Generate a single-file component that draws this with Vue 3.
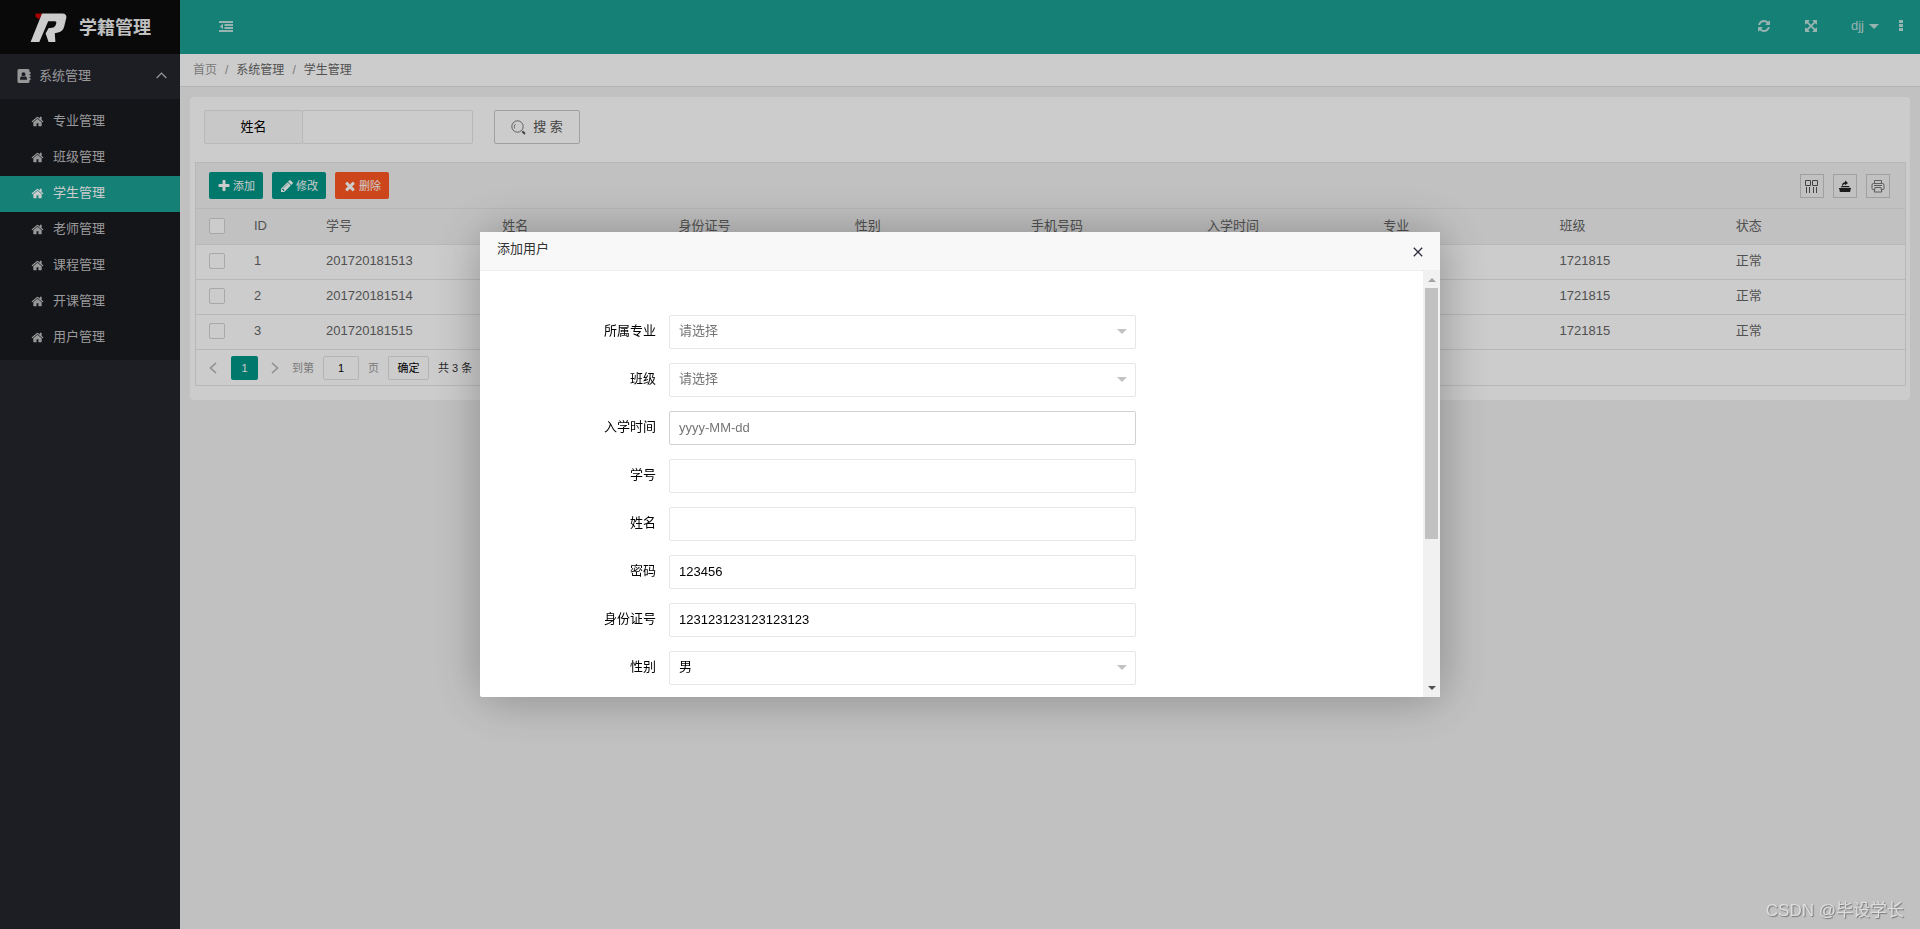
<script setup>
import { ref } from 'vue'

const menu = ['专业管理', '班级管理', '学生管理', '老师管理', '课程管理', '开课管理', '用户管理']
const active = ref('学生管理')
const columns = ['ID', '学号', '姓名', '身份证号', '性别', '手机号码', '入学时间', '专业', '班级', '状态']
const rows = [
  ['1', '201720181513', '', '', '', '', '', '', '1721815', '正常'],
  ['2', '201720181514', '', '', '', '', '', '', '1721815', '正常'],
  ['3', '201720181515', '', '', '', '', '', '', '1721815', '正常'],
]
const fields = ref([
  { id: 'major', label: '所属专业', type: 'select', value: '', options: [] },
  { id: 'class', label: '班级', type: 'select', value: '', options: [] },
  { id: 'date', label: '入学时间', type: 'text', value: '', placeholder: 'yyyy-MM-dd', hover: true },
  { id: 'number', label: '学号', type: 'text', value: '' },
  { id: 'name', label: '姓名', type: 'text', value: '' },
  { id: 'password', label: '密码', type: 'text', value: '123456' },
  { id: 'idcard', label: '身份证号', type: 'text', value: '123123123123123123' },
  { id: 'gender', label: '性别', type: 'select', value: '男', options: ['男', '女'] },
])
const keyword = ref('')
const page = ref('1')

const icons = {
  home: 'M1472 992v480q0 26-19 45t-45 19h-384v-384h-256v384h-384q-26 0-45-19t-19-45v-480q0-1 .5-3t.5-3l575-474 575 474q1 2 1 6zm223-69l-62 74q-8 9-21 11h-3q-13 0-21-7l-692-577-692 577q-12 8-24 7-13-2-21-11l-62-74q-8-10-7-23.5t11-21.5l719-599q32-26 76-26t76 26l244 204v-195q0-14 9-23t23-9h192q14 0 23 9t9 23v408l219 182q10 8 11 21.5t-7 23.5z',
  plus: 'M1600 736v192q0 40-28 68t-68 28h-416v416q0 40-28 68t-68 28h-192q-40 0-68-28t-28-68v-416h-416q-40 0-68-28t-28-68v-192q0-40 28-68t68-28h416v-416q0-40 28-68t68-28h192q40 0 68 28t28 68v416h416q40 0 68 28t28 68z',
  pencil: 'M491 1536l91-91-235-235-91 91v107h128v128h107zm523-928q0-22-22-22-10 0-17 7l-542 542q-7 7-7 17 0 22 22 22 10 0 17-7l542-542q7-7 7-17zm-54-192l416 416-832 832h-416v-416zm683 96q0 53-37 90l-166 166-416-416 166-165q36-38 90-38 53 0 91 38l235 234q37 39 37 91z',
  times: 'M1490 1322q0 40-28 68l-136 136q-28 28-68 28t-68-28l-294-294-294 294q-28 28-68 28t-68-28l-136-136q-28-28-28-68t28-68l294-294-294-294q-28-28-28-68t28-68l136-136q28-28 68-28t68 28l294 294 294-294q28-28 68-28t68 28l136 136q28 28 28 68t-28 68l-294 294 294 294q28 28 28 68z',
  refresh: 'M1639 1056q0 5-1 7-64 268-268 434.5t-478 166.5q-146 0-282.5-55t-243.5-157l-129 129q-19 19-45 19t-45-19-19-45v-448q0-26 19-45t45-19h448q26 0 45 19t19 45-19 45l-137 137q71 66 161 102t187 36q134 0 250-65t186-179q11-17 53-117 8-23 30-23h192q13 0 22.5 9.5t9.5 22.5zm25-800v448q0 26-19 45t-45 19h-448q-26 0-45-19t-19-45 19-45l138-138q-148-137-349-137-134 0-250 65t-186 179q-11 17-53 117-8 23-30 23h-199q-13 0-22.5-9.5t-9.5-22.5v-7q65-268 270-434.5t480-166.5q146 0 284 55.5t245 156.5l130-129q19-19 45-19t45 19 19 45z',
  expand: 'M1411 541l-355 355 355 355 144-144q29-31 70-14 39 17 39 59v448q0 26-19 45t-45 19h-448q-42 0-59-40-17-39 14-69l144-144-355-355-355 355 144 144q31 30 14 69-17 40-59 40h-448q-26 0-45-19t-19-45v-448q0-42 40-59 39-17 69 14l144 144 355-355-355-355-144 144q-19 19-45 19-12 0-24-5-40-17-40-59v-448q0-26 19-45t45-19h448q42 0 59 40 17 39-14 69l-144 144 355 355 355-355-144-144q-31-30-14-69 17-40 59-40h448q26 0 45 19t19 45v448q0 42-39 59-13 5-25 5-26 0-45-19z',
}
const actions = [
  { text: '添加', icon: 'plus' },
  { text: '修改', icon: 'pencil' },
  { text: '删除', icon: 'times', danger: true },
]
</script>

<template>
  <div class="layout">
    <aside class="side">
      <div class="logo">
        <svg class="logo-mark" viewBox="0 0 37 30" aria-hidden="true">
          <path fill="#d00000" d="M5.3 1.2 6.5.5H12L9 6.5 5.6 3.8z" />
          <path fill="#fff" d="M12 .4H32.5Q36.8.6 36.4 4.6L34.2 13.6Q33 18.6 28 19.6L24.8 20.2 25.4 29H18.6L15.6 20.4 18.5 15.2 23.4 14.6Q25.6 14 26.2 10.6 26.8 8.2 24.8 8.2H18.2L9.3 29H.6L9.4 7z" />
        </svg>
        <h1>学籍管理</h1>
      </div>
      <nav>
        <button class="group" type="button">
          <svg class="book" viewBox="0 0 14 14" aria-hidden="true">
            <path fill="currentColor" fill-rule="evenodd" d="M2 0h9q1.500 0 1.500 1.500V3h1v2h-1v1h1v2h-1v1h1v2h-1v1.500Q12.500 14 11 14H2Q.5 14 .5 12.500v-11Q.5 0 2 0zM6.500 3.200a2 2 0 1 0 0 4 2 2 0 0 0 0-4zM3 10.700h7Q10 7.500 8 7.200q-1.500 1-3 0Q3 7.500 3 10.700z" />
          </svg>
          <span>系统管理</span>
          <svg class="up" viewBox="0 0 11 7" aria-hidden="true"><path d="M.7 6 5.500 1l4.800 5" fill="none" stroke="currentColor" stroke-width="1.200" /></svg>
        </button>
        <ul class="submenu">
          <li v-for="item in menu" :key="item">
            <a href="#" :class="{ active: item === active }" @click.prevent="active = item">
              <svg class="fa" viewBox="0 0 1792 1792" aria-hidden="true"><path :d="icons.home" fill="currentColor" /></svg>
              {{ item }}
            </a>
          </li>
        </ul>
      </nav>
    </aside>

    <div class="main">
      <header class="top">
        <button type="button" aria-label="折叠菜单">
          <svg class="fold" viewBox="0 0 14 11" aria-hidden="true"><path fill="currentColor" d="M0 0h14v2H0zM5.500 3H14v2H5.500zM5.500 6H14v2H5.500zM0 9h14v2H0zM4 2.800v5.400L.8 5.500z" /></svg>
        </button>
        <div class="top-right">
          <button type="button" aria-label="刷新"><svg class="fa14" viewBox="0 0 1792 1792" aria-hidden="true"><path :d="icons.refresh" fill="currentColor" /></svg></button>
          <button type="button" aria-label="全屏"><svg class="fa14" viewBox="0 0 1792 1792" aria-hidden="true"><path :d="icons.expand" fill="currentColor" /></svg></button>
          <button type="button" class="user">djj<i></i></button>
          <button type="button" class="more" aria-label="更多"><svg viewBox="0 0 4 12" aria-hidden="true"><path fill="currentColor" d="M0 0h4v3H0zM0 4h4v3H0zM0 8h4v3H0z" /></svg></button>
        </div>
      </header>
      <nav class="crumbs">
        <a href="#" class="first">首页</a><span>/</span><a href="#">系统管理</a><span>/</span><a href="#">学生管理</a>
      </nav>

      <main class="card">
        <form class="search" @submit.prevent>
          <label for="keyword">姓名</label>
          <input id="keyword" v-model="keyword" type="text" />
          <button type="submit">
            <svg viewBox="0 0 15 15" aria-hidden="true">
              <circle cx="6.500" cy="6.500" r="5.700" fill="none" stroke="currentColor" stroke-width=".8" />
              <path d="M3.500 8.500Q2.500 5.500 4.500 4M10.500 10.500 14 14" fill="none" stroke="currentColor" stroke-width=".7" />
              <path d="M11.500 11.500 14 14" stroke="currentColor" stroke-width="2" />
            </svg>
            搜 索
          </button>
        </form>

        <section class="table-box">
          <div class="toolbar">
            <button v-for="a in actions" :key="a.text" type="button" class="action" :class="{ danger: a.danger }">
              <svg class="fa14" viewBox="0 0 1792 1792" aria-hidden="true"><path :d="icons[a.icon]" fill="currentColor" /></svg>{{ a.text }}
            </button>
            <div class="tools">
              <button type="button" aria-label="筛选列">
                <svg viewBox="0 0 14 14" fill="none" stroke="currentColor" aria-hidden="true"><path d="M.5 1.500h5v5h-5zM7.500 1.500h5v5h-5zM1.500 8v6M4.500 8v6M8.500 8v6M11.500 8v6" /></svg>
              </button>
              <button type="button" aria-label="导出">
                <svg viewBox="0 0 14 14" aria-hidden="true"><path fill="#222" d="M1 9h12v1.200h-.6V12q0 1-1 1H2.600q-1 0-1-1v-1.800H1zM3.500 7h7.500l.8 1.300H2.700zM4 6.500Q4 3.500 7 3.300V1.500L10 4 7 6.200V5Q5.300 5 4.900 6.500z" /></svg>
              </button>
              <button type="button" aria-label="打印">
                <svg viewBox="0 0 14 14" fill="none" stroke="currentColor" stroke-width=".8" aria-hidden="true"><path d="M3.500 4V1.500h7V4M3.500 10.500H2Q1 10.500 1 9.500V6Q1 4.500 2.500 4.500h9Q13 4.500 13 6v3.500q0 1-1 1h-1.500M4 8.500h6l.8 4.500H3.200zM3 6.500h8" /></svg>
              </button>
            </div>
          </div>
          <table>
            <colgroup>
              <col class="c-check" /><col class="c-id" /><col v-for="n in 9" :key="n" /><col class="c-end" />
            </colgroup>
            <thead>
              <tr>
                <th><input type="checkbox" aria-label="全选" /></th>
                <th v-for="c in columns" :key="c">{{ c }}</th>
                <th></th>
              </tr>
            </thead>
            <tbody>
              <tr v-for="r in rows" :key="r[0]">
                <td><input type="checkbox" :aria-label="'选择 ' + r[0]" /></td>
                <td v-for="(v, i) in r" :key="i">{{ v }}</td>
                <td></td>
              </tr>
            </tbody>
          </table>
          <div class="pager">
            <button type="button" class="arrow" aria-label="上一页"><svg viewBox="0 0 8 12" aria-hidden="true"><path d="M7 1 1.500 6 7 11" /></svg></button>
            <button type="button" class="current">1</button>
            <button type="button" class="arrow" aria-label="下一页"><svg viewBox="0 0 8 12" aria-hidden="true"><path d="M1 1l5.500 5L1 11" /></svg></button>
            <label for="page">到第</label>
            <input id="page" v-model="page" type="text" />
            <span class="muted">页</span>
            <button type="button" class="ok">确定</button>
            <span>共 3 条</span>
          </div>
        </section>
      </main>
    </div>

    <div class="mask"></div>

    <section class="dialog" role="dialog" aria-labelledby="dialog-title">
      <header>
        <h2 id="dialog-title">添加用户</h2>
        <button type="button" aria-label="关闭"><svg viewBox="0 0 10 10" aria-hidden="true"><path d="M.8.8l8.400 8.400M9.200.8.8 9.200" stroke="#2d2c3b" stroke-width="1.300" /></svg></button>
      </header>
      <div class="dialog-body">
        <form @submit.prevent>
          <div v-for="f in fields" :key="f.id" class="row">
            <label :for="f.id">{{ f.label }}</label>
            <div v-if="f.type === 'select'" class="select">
              <select :id="f.id" v-model="f.value" :class="{ empty: !f.value }">
                <option value="">请选择</option>
                <option v-for="o in f.options" :key="o" :value="o">{{ o }}</option>
              </select>
            </div>
            <input v-else :id="f.id" v-model="f.value" type="text" :placeholder="f.placeholder" :class="{ hover: f.hover }" />
          </div>
        </form>
        <div class="scrollbar">
          <i class="tri up"></i>
          <div class="thumb"></div>
          <i class="tri down"></i>
        </div>
      </div>
    </section>

    <div class="watermark">CSDN @毕设学长</div>
  </div>
</template>

<style>
body {
  margin: 0;
  background: #f2f2f2;
}
</style>

<style scoped>
.layout {
  display: flex;
  min-height: 100vh;
  font: 13px/20px "Liberation Sans", "Noto Sans CJK SC", sans-serif;
  color: #333;
}
* {
  box-sizing: border-box;
}
button,
input,
select {
  font: inherit;
  margin: 0;
  padding: 0;
  color: inherit;
}
button {
  background: none;
  border: 0;
  cursor: pointer;
}
svg {
  display: block;
  flex: none;
}
a {
  color: inherit;
  text-decoration: none;
}
h1,
h2,
ul {
  margin: 0;
  padding: 0;
  list-style: none;
}
.fa {
  width: 13px;
  height: 13px;
}
.fa14 {
  width: 14px;
  height: 14px;
}

.side {
  width: 180px;
  flex: none;
  background: #23262e;
  color: #c0bfc0;
}
.logo {
  height: 54px;
  display: flex;
  align-items: center;
  gap: 12px;
  padding: 2px 0 0 30px;
  background: #0c0c0c;
  color: #fff;
}
.logo-mark {
  width: 37px;
  height: 30px;
}
.logo h1 {
  font-size: 18px;
  line-height: 24px;
  font-weight: 700;
  color: #f0f0f0;
}
.group {
  display: flex;
  align-items: center;
  width: 100%;
  height: 45px;
  padding: 0 13px 2px 17px;
  gap: 8px;
}
.book {
  width: 14px;
  height: 14px;
}
.group .up {
  width: 11px;
  height: 7px;
  margin-left: auto;
}
.submenu {
  padding: 5px 0 4px;
  background: #181b20;
}
.submenu a {
  display: flex;
  align-items: center;
  height: 36px;
  padding: 0 0 2px 31px;
  gap: 9px;
}
.submenu a.active {
  background: #1aa094;
  color: #fff;
}

.main {
  flex: 1;
  min-width: 0;
}
.top {
  height: 54px;
  display: flex;
  align-items: center;
  justify-content: space-between;
  padding: 0 17px 2px 39px;
  background: #1aa094;
  color: #bfe2de;
}
.fold {
  width: 14px;
  height: 11px;
}
.top-right {
  display: flex;
  align-items: center;
  gap: 33px;
}
.user {
  display: flex;
  align-items: center;
  gap: 5px;
}
.user i {
  border: 5px solid transparent;
  border-top-color: currentColor;
  border-bottom: 0;
}
.more {
  margin-left: -13px;
}
.more svg {
  width: 4px;
  height: 12px;
}
.crumbs {
  display: flex;
  align-items: center;
  height: 33px;
  padding: 0 13px;
  background: #fff;
  border-bottom: 1px solid #e0e0e0;
  font-size: 12px;
  color: #666;
}
.crumbs .first,
.crumbs span {
  color: #999;
}
.crumbs span {
  margin: 0 8px;
}

.card {
  margin: 10px;
  padding: 13px 4px 14px 5px;
  background: #fff;
  border-radius: 4px;
}
.search {
  display: flex;
  padding: 0 9px;
  margin-bottom: 18px;
}
.search label,
.search input,
.search button {
  height: 34px;
  border: 1px solid #e6e6e6;
  border-radius: 2px;
}
.search label {
  width: 99px;
  line-height: 32px;
  text-align: center;
  background: #fbfbfb;
  color: #000;
}
.search input {
  width: 171px;
  margin-left: -1px;
  padding: 0 9px;
}
.search button {
  display: flex;
  align-items: center;
  justify-content: center;
  gap: 7px;
  width: 86px;
  margin-left: 21px;
  border-color: #c9c9c9;
  color: #555;
}
.search svg {
  width: 15px;
  height: 15px;
}

.table-box {
  border: 1px solid #e6e6e6;
}
.toolbar {
  display: flex;
  align-items: center;
  gap: 9px;
  height: 46px;
  padding: 0 15px 0 13px;
  background: #f2f2f2;
  border-bottom: 1px solid #e6e6e6;
}
.action {
  display: flex;
  align-items: center;
  gap: 2px;
  height: 27px;
  padding: 0 8px;
  border-radius: 2px;
  background: #009688;
  color: #fff;
  font-size: 11px;
}
.action.danger {
  background: #ff5722;
}
.tools {
  display: flex;
  gap: 9px;
  margin-left: auto;
  color: #555;
}
.tools button {
  display: grid;
  place-items: center;
  width: 24px;
  height: 24px;
  border: 1px solid #c9c9c9;
}
.tools svg {
  width: 14px;
  height: 14px;
}
table {
  width: 100%;
  table-layout: fixed;
  border-collapse: separate;
  border-spacing: 0;
  color: #666;
}
.c-check {
  width: 45px;
}
.c-id {
  width: 72px;
}
.c-end {
  width: 6px;
}
th,
td {
  height: 35px;
  padding: 0 0 2px 13px;
  border-bottom: 1px solid #e6e6e6;
  text-align: left;
  font-weight: 400;
  line-height: 20px;
  white-space: nowrap;
}
th {
  height: 36px;
  background: #f2f2f2;
}
th:last-child,
td:last-child {
  padding: 0;
}
table input {
  display: block;
  appearance: none;
  width: 16px;
  height: 16px;
  border: 1px solid #d2d2d2;
  border-radius: 2px;
  background: #fff;
}
.pager {
  display: flex;
  align-items: center;
  height: 35px;
  padding-left: 13px;
  gap: 9px;
  font-size: 11px;
}
.arrow svg {
  width: 8px;
  height: 12px;
  fill: none;
  stroke: #b0b0b0;
  stroke-width: 1.5;
}
.pager .arrow {
  width: 10px;
}
.pager .current {
  width: 27px;
  height: 24px;
  margin: 0 4px 0 3px;
  border-radius: 2px;
  background: #009688;
  color: #fff;
}
.pager label,
.pager .muted {
  color: #999;
}
.pager label {
  margin-left: 2px;
}
.pager input {
  width: 36px;
  height: 24px;
  border: 1px solid #e2e2e2;
  border-radius: 2px;
  text-align: center;
  color: #000;
}
.pager .ok {
  width: 41px;
  height: 24px;
  border: 1px solid #e2e2e2;
  border-radius: 2px;
  color: #000;
}

.mask {
  position: fixed;
  inset: 0;
  background: rgba(0, 0, 0, 0.2);
}
.dialog {
  position: fixed;
  top: 25%;
  left: 25%;
  width: 50%;
  height: 50%;
  display: flex;
  flex-direction: column;
  background: #fff;
  border-radius: 2px;
  box-shadow: 1px 1px 50px rgba(0, 0, 0, 0.3);
}
.dialog header {
  display: flex;
  justify-content: space-between;
  height: 39px;
  padding: 7px 17px 0 17px;
  background: #f8f8f8;
  border-bottom: 1px solid #eee;
}
.dialog h2 {
  font-size: 13px;
  line-height: 20px;
  font-weight: 400;
}
.dialog header svg {
  width: 10px;
  height: 10px;
}
.dialog header button {
  height: 26px;
}
.dialog-body {
  flex: 1;
  min-height: 0;
  display: flex;
}
.dialog form {
  flex: 1;
  padding: 44px 287px 0 99px;
  display: flex;
  flex-direction: column;
  gap: 14px;
  overflow: hidden;
  color: #000;
}
.row {
  display: flex;
  flex: none;
  gap: 13px;
}
.row label {
  width: 77px;
  line-height: 32px;
  text-align: right;
}
.row > input,
.select {
  position: relative;
  flex: 1;
  min-width: 0;
  height: 34px;
}
.row > input,
.select select {
  border: 1px solid #e6e6e6;
  border-radius: 2px;
  padding: 0 9px 2px;
  background: #fff;
}
.row > input.hover {
  border-color: #d2d2d2;
}
.select select {
  appearance: none;
  width: 100%;
  height: 100%;
}
.select select.empty,
.row > input::placeholder {
  color: #757575;
}
.select::after {
  content: "";
  position: absolute;
  right: 9px;
  top: 14px;
  border: 5px solid transparent;
  border-top-color: #c2c2c2;
  border-bottom: 0;
  pointer-events: none;
}
.scrollbar {
  display: flex;
  flex-direction: column;
  align-items: center;
  width: 17px;
  padding: 7px 0;
  background: #f1f1f1;
}
.thumb {
  width: 13px;
  height: 61%;
  margin: 6px 0 auto;
  background: #c1c1c1;
}
.tri {
  border: 4px solid transparent;
}
.tri.up {
  border-top: 0;
  border-bottom-color: #a3a3a3;
}
.tri.down {
  border-bottom: 0;
  border-top-color: #505050;
}

.watermark {
  position: fixed;
  right: 16px;
  bottom: 5px;
  font-size: 17px;
  line-height: 26px;
  color: #dedede;
  text-shadow: 1px 1px 1px #777;
}
</style>
